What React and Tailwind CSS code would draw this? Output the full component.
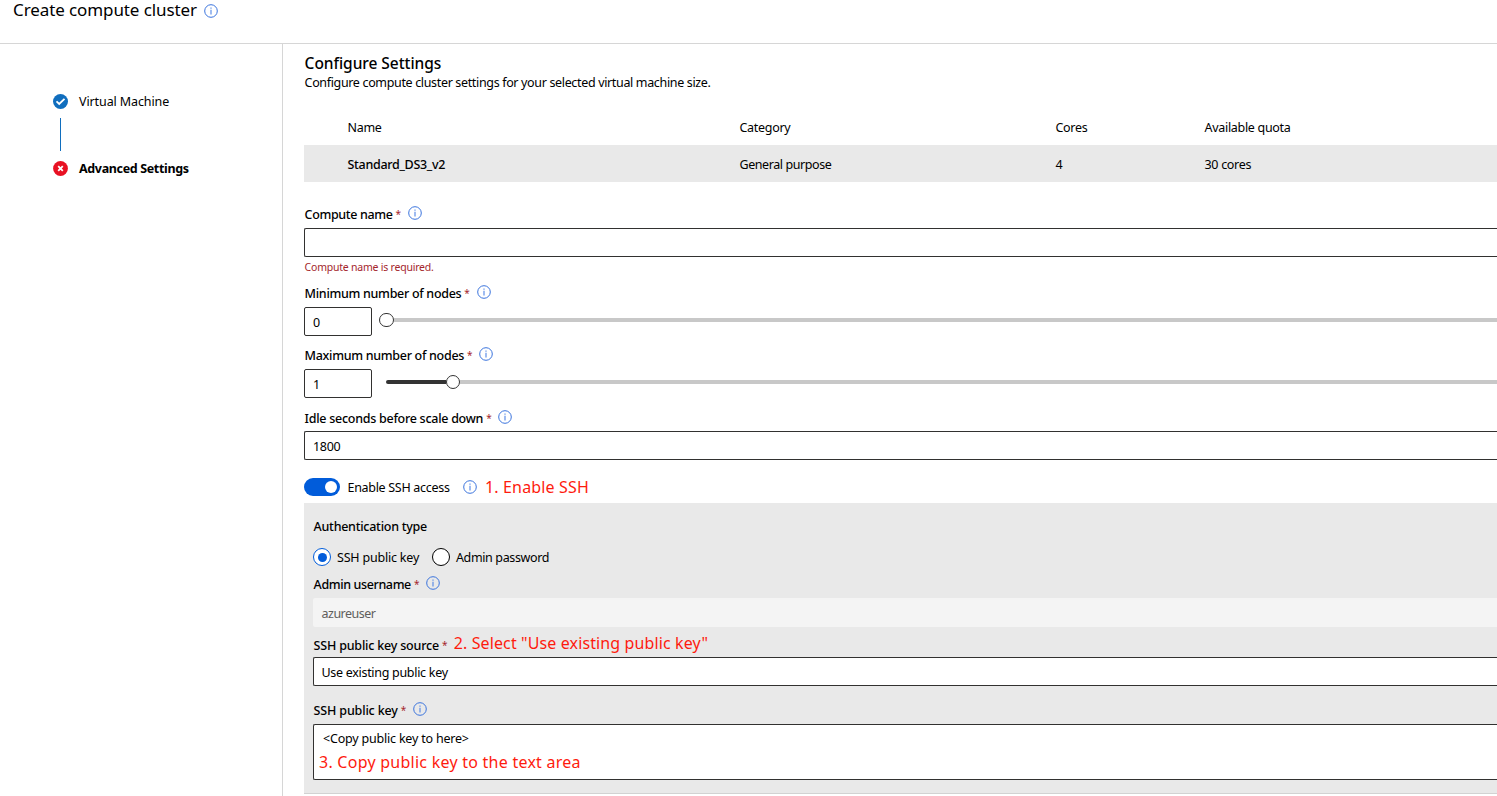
import React from "react";

function Info({ className = "" }) {
  return (
    <svg viewBox="0 0 14 14" className={"h-[14px] w-[14px] shrink-0 " + className} fill="none">
      <circle cx="7" cy="7" r="6.3" stroke="#3b74dd" strokeWidth="1" />
      <path d="M7 5.8v4.6" stroke="#4f84e6" strokeWidth="1.1" />
      <path d="M7 3.5v1.2" stroke="#4f84e6" strokeWidth="1.1" />
    </svg>
  );
}

function Label({ children, className = "", info }) {
  return (
    <div className={"flex h-[18px] items-center pl-[0.6px] whitespace-nowrap " + className}>
      <span className="pt-0.5 font-medium">{children}</span>
      <span className="ml-[3px] text-[10px] text-[#a4262c]">*</span>
      {info && <Info className="mb-[3px] ml-[7px]" />}
    </div>
  );
}

function Slider({ value, dark, className = "" }) {
  return (
    <div className={"flex h-[29px] " + className}>
      <div className="flex w-[68px] items-center rounded-[2px] border border-[#323130] bg-white pt-0.5 pl-2">{value}</div>
      <div className="flex h-[26px] flex-1 items-center pl-[14px]">
        {dark && <div className="h-1 w-[60px] rounded-l-full bg-[#333]" />}
        <div className={"h-[14px] shrink-0 rounded-full border border-[#333] bg-white " + (dark ? "w-[14px]" : "-ml-[7px] w-[15px]")} />
        <div className="h-1 flex-1 bg-[#c8c8c8]" />
      </div>
    </div>
  );
}

export default function App() {
  return (
    <div className="flex h-[796px] w-[1497px] flex-col overflow-hidden bg-white font-['Noto_Sans',sans-serif] text-[12.5px] leading-[18px] tracking-[-0.3px] text-black">
      <header className="flex h-11 shrink-0 items-start border-b border-[#d6d6d6] pl-[13px]">
        <h1 className="text-[17px] leading-[20px] tracking-[-0.1px] whitespace-nowrap">Create compute cluster</h1>
        <Info className="mt-1 ml-[7px]" />
      </header>
      <div className="flex min-h-0 flex-1">
        <aside className="w-[283px] shrink-0 border-r border-[#d6d6d6] pt-[49px] pl-[53px]">
          <div className="flex h-[18px] items-center">
            <svg viewBox="0 0 15 15" className="mb-px h-[15px] w-[15px]" fill="none">
              <circle cx="7.5" cy="7.5" r="7.5" fill="#106ebe" />
              <path d="M3.5 7.4l2.7 2.6 5.3-5.2" stroke="#fff" strokeWidth="1.8" />
            </svg>
            <span className="ml-[11px] tracking-[-0.1px]">Virtual Machine</span>
          </div>
          <div className="mt-[7px] ml-[7px] h-[33px] w-px bg-[#106ebe]" />
          <div className="mt-2 flex h-[18px] items-center">
            <svg viewBox="0 0 15 15" className="h-[15px] w-[15px]" fill="none">
              <circle cx="7.5" cy="7.5" r="7.4" fill="#e81123" />
              <path d="M5.2 5.2l4.6 4.6M9.8 5.2l-4.6 4.6" stroke="#fff" strokeWidth="1.8" />
            </svg>
            <span className="ml-[11px] pt-0.5 font-bold tracking-[-0.35px]">Advanced Settings</span>
          </div>
        </aside>
        <main className="min-w-0 flex-1 pt-[9px] pl-[21px]">
          <h2 className="h-5 pl-[0.6px] text-[15.5px] leading-[20px] font-medium tracking-[-0.05px]">Configure Settings</h2>
          <p className="h-[18px] pt-px pl-[0.6px] tracking-[-0.345px]">Configure compute cluster settings for your selected virtual machine size.</p>
          <div className="mt-[19px] grid h-[35px] grid-cols-[392px_316px_149px_1fr] items-center pl-[43.5px]">
            <span>Name</span>
            <span>Category</span>
            <span>Cores</span>
            <span>Available quota</span>
          </div>
          <div className="grid h-[37px] grid-cols-[392px_316px_149px_1fr] items-center bg-[#e9e9e9] pt-0.5 pl-[43.5px]">
            <span className="font-medium">Standard_DS3_v2</span>
            <span className="tracking-[-0.42px]">General purpose</span>
            <span>4</span>
            <span>30 cores</span>
          </div>
          <Label info className="mt-[23px] tracking-[-0.36px]">Compute name</Label>
          <div className="mt-[5px] h-[29px] rounded-l-[2px] border border-r-0 border-[#323130]" />
          <p className="mt-px h-[18px] pl-[0.6px] text-[10.5px] tracking-[-0.22px] text-[#a4262c]">Compute name is required.</p>
          <Label info className="mt-2">Minimum number of nodes</Label>
          <Slider value="0" className="mt-[5px]" />
          <Label info className="mt-[10px]">Maximum number of nodes</Label>
          <Slider value="1" dark className="mt-[5px]" />
          <Label info className="mt-[11px] tracking-[-0.27px]">Idle seconds before scale down</Label>
          <div className="mt-1 flex h-[29px] items-center rounded-l-[2px] border border-r-0 border-[#323130] pt-0.5 pl-2">1800</div>
          <div className="mt-[18px] flex h-[18px] items-center">
            <div className="flex h-[18px] w-9 items-center justify-end rounded-full bg-[#015cda] pr-[3px]">
              <div className="h-3 w-3 rounded-full bg-white" />
            </div>
            <span className="ml-[7.5px] w-[115.5px] pt-0.5">Enable SSH access</span>
            <Info />
            <span className="ml-2 text-[16px] tracking-[0.15px] text-[#fe1b0e]">1. Enable SSH</span>
          </div>
          <section className="mt-[7px] h-[291px] border-b border-[#d2d2d2] bg-[#e9e9e9] pt-[14px] pl-[9px]">
            <div className="h-[18px] pt-px pl-[0.6px] font-medium tracking-[-0.26px]">Authentication type</div>
            <div className="mt-[13px] flex h-[18px] items-center">
              <div className="flex h-[18px] w-[18px] items-center justify-center rounded-full border border-[#015cda] bg-white">
                <div className="h-[9px] w-[9px] rounded-full bg-[#015cda]" />
              </div>
              <span className="ml-[6px] w-[95px] pt-0.5 tracking-[-0.2px]">SSH public key</span>
              <div className="h-[18px] w-[18px] rounded-full border border-black bg-white" />
              <span className="ml-[6px] pt-0.5 tracking-[-0.37px]">Admin password</span>
            </div>
            <Label info className="mt-[9px] tracking-[-0.38px]">Admin username</Label>
            <div className="mt-[5px] flex h-[29px] items-center rounded-l-[2px] bg-[#f4f4f4] pt-0.5 pl-[8.5px] tracking-[-0.5px] text-[#605e5c]">azureuser</div>
            <div className="mt-[9px] flex h-[18px] items-center">
              <Label className="tracking-[-0.2px]">SSH public key source</Label>
              <span className="mb-1 ml-[6.5px] text-[16px] tracking-[0.12px] whitespace-nowrap text-[#fe1b0e]">2. Select "Use existing public key"</span>
            </div>
            <div className="mt-[3px] flex h-[29px] items-center rounded-l-[2px] border border-r-0 border-[#323130] bg-white pt-0.5 pl-[7.5px]">Use existing public key</div>
            <Label info className="mt-[15px] tracking-[-0.16px]">SSH public key</Label>
            <div className="mt-[5px] h-14 rounded-l-[2px] border border-r-0 border-[#323130] bg-white pt-[5px] pl-[5px]">
              <div className="h-[18px] pl-1 tracking-[-0.2px]">&lt;Copy public key to here&gt;</div>
              <div className="mt-1 text-[16px] leading-[20px] tracking-[0.25px] text-[#fe1b0e]">3. Copy public key to the text area</div>
            </div>
          </section>
        </main>
      </div>
    </div>
  );
}
